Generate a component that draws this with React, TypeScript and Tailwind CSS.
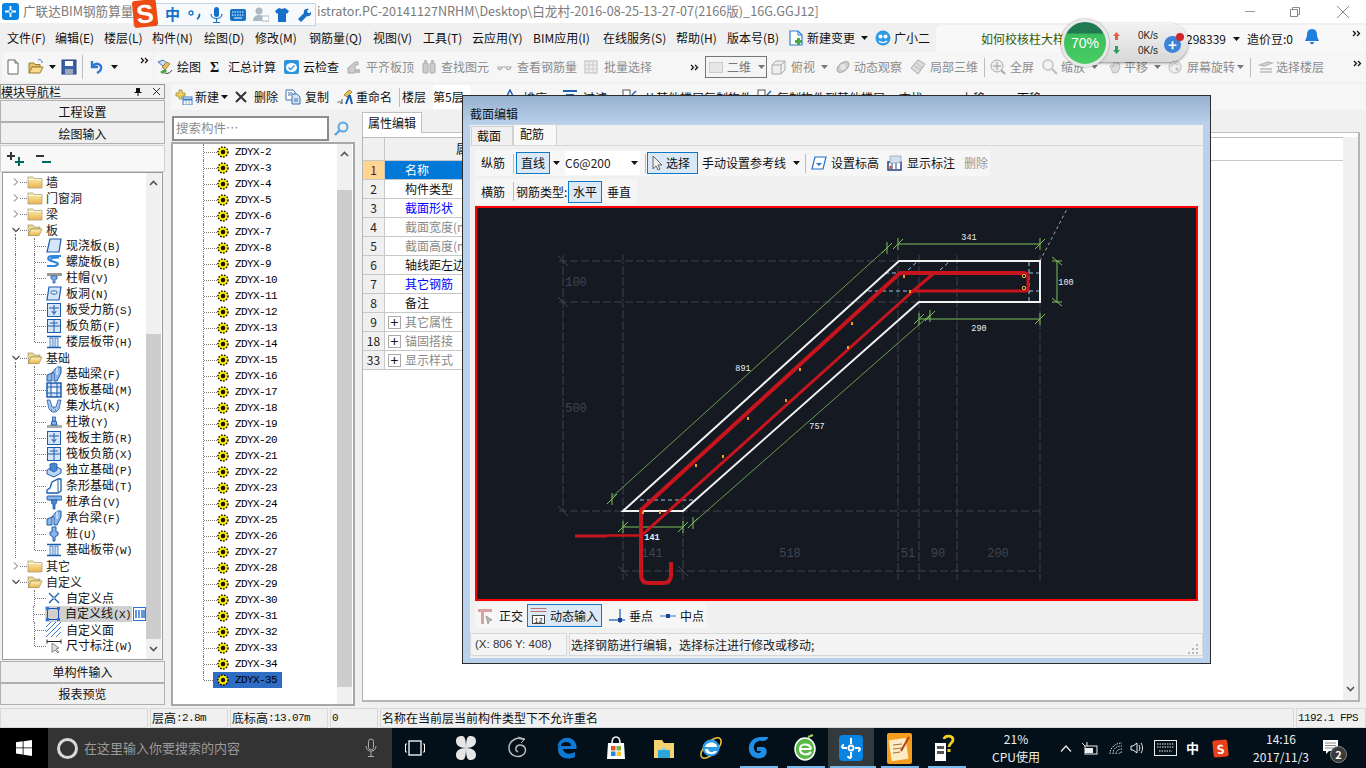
import React from "react";

const CJK = "font-['Noto_Sans_CJK_SC','Liberation_Sans',sans-serif]";

const Mx = ({ t }: { t: string }) => (
  <>
    {t.split(/([\x00-\x7f]+)/).map((p, i) =>
      /^[\x00-\x7f]/.test(p) ? (
        <span key={i} className="font-['Liberation_Mono',monospace] text-[11px] tracking-[-0.6px]">{p}</span>
      ) : (
        <span key={i}>{p}</span>
      )
    )}
  </>
);

const S = ({ children, w = 16, h = 16, cls = "" }: { children: React.ReactNode; w?: number; h?: number; cls?: string }) => (
  <svg width={w} height={h} viewBox={`0 0 ${w} ${h}`} className={"shrink-0 " + cls}>{children}</svg>
);

const Caret = ({ cls = "" }: { cls?: string }) => (
  <svg width="7" height="4" viewBox="0 0 7 4" className={"shrink-0 " + cls}><path d="M0 0h7L3.500 4z" fill="currentColor" /></svg>
);
const DblChevron = () => (
  <svg width="9" height="7" viewBox="0 0 9 7" className="shrink-0"><path d="M1 1l2.500 2.500L1 6M5 1l2.500 2.500L5 6" fill="none" stroke="#111" strokeWidth="1.300" /></svg>
);

/* ---------- tree icons ---------- */
const B = "#1d5cad";
const L = "#d5e6f8";
const Folder = ({ open }: { open?: boolean }) => (
  <S w={16} h={14}>
    <defs>
      <linearGradient id="fg" x1="0" y1="0" x2="0" y2="1"><stop offset="0" stopColor="#fff2b8" /><stop offset="1" stopColor="#e9b44a" /></linearGradient>
    </defs>
    {open ? (
      <>
        <path d="M1 2h5l1 2h6v2H4L1.500 12z" fill="#f3d98c" stroke="#9a8f6a" strokeWidth="0.700" />
        <path d="M4 6h11l-3 6.500H1z" fill="url(#fg)" stroke="#a08a4c" strokeWidth="0.700" />
      </>
    ) : (
      <>
        <path d="M1 2h5l1 1.500h8V13H1z" fill="url(#fg)" stroke="#a8a08a" strokeWidth="0.800" />
        <path d="M1.500 4.500h13" stroke="#fff8d8" />
      </>
    )}
  </S>
);

const TreeIcon = ({ k }: { k: string }) => {
  switch (k) {
    case "slab":
      return <S><path d="M4 1h11l-2 13H1z" fill={L} stroke={B} strokeWidth="1.200" /></S>;
    case "spiral":
      return <S><path d="M15 2H6C2 2 1 5 4 6.500l6 2c3 1 2 2.500-1 3.500H1M13 3.500L6 4c-1 0-1 1 0 1.500" fill="none" stroke="#2e86de" strokeWidth="2.200" /></S>;
    case "cap":
      return <S><rect x="1" y="3" width="15" height="3" fill="#999" /><path d="M5 6h6v3H9v4H7V9H5z" fill="#8ab4e8" stroke={B} strokeWidth="0.800" /></S>;
    case "hole":
      return <S><path d="M3 1h12l-2 13H1z" fill={L} stroke={B} strokeWidth="1.200" /><rect x="5" y="5" width="6" height="3" rx="1.500" fill="#fff" stroke={B} /></S>;
    case "grid":
      return <S><rect x="1.500" y="1.500" width="13" height="13" fill={L} stroke={B} /><path d="M3 6h10M8 3v10" stroke={B} fill="none" /><path d="M10 9a2 2 0 1 1-4 0" stroke={B} fill="none" /></S>;
    case "grid2":
      return <S><rect x="1.500" y="1.500" width="13" height="13" fill={L} stroke={B} /><path d="M2 8h12M8 2v12M4 5h8" stroke={B} fill="none" /></S>;
    case "band":
      return <S><path d="M1 2.500h14M1 13.500h14" stroke={B} strokeWidth="1.500" /><rect x="4" y="4" width="3" height="9" fill={L} stroke={B} strokeWidth="0.700" /><rect x="9" y="4" width="3" height="9" fill={L} stroke={B} strokeWidth="0.700" /></S>;
    case "beam":
      return <S><path d="M1 15V9l5-2V15zM6 7l5-6h4v6l-4 8H8V7z" fill="#8cb6e6" stroke={B} strokeWidth="1" /><path d="M11 1v8" stroke="#fff" /></S>;
    case "raft":
      return <S><rect x="1" y="1" width="14" height="14" fill={L} stroke={B} strokeWidth="1.500" /><path d="M5 1v14M11 1v14M1 5h14M1 11h14" stroke={B} /><rect x="6" y="6" width="4" height="4" fill="#fff" /></S>;
    case "pit":
      return <S><path d="M1 2h3l2 7h4l2-7h3l-2 9-3 3H6l-3-3z" fill="#a8c8ef" stroke={B} strokeWidth="0.800" /><path d="M5 12h1M9 12h1M7 10h1" stroke="#555" strokeDasharray="1 1" /></S>;
    case "pier":
      return <S><rect x="1" y="11" width="15" height="3" fill="#aaa" /><path d="M5 11l1-4h4l1 4z" fill="#8ab4e8" stroke={B} /><rect x="6.500" y="3" width="3" height="4" fill="#8ab4e8" stroke={B} strokeWidth="0.800" /></S>;
    case "iso":
      return <S><path d="M1 8l7-4 7 3v4l-7 4-7-3z" fill="#bcd5f2" stroke={B} /><path d="M4 2l4-1 3 1v6l-3 2-4-2z" fill="#4d86cc" stroke={B} strokeWidth="0.800" /></S>;
    case "strip":
      return <S><path d="M1 15v-3l3-2 2-6 6-3h3v12l-3 2H5z" fill="#fff" stroke={B} strokeWidth="1.300" /><path d="M12 1v13" stroke={B} /></S>;
    case "pilecap":
      return <S><rect x="1" y="2" width="15" height="4" rx="1" fill="#8ab4e8" stroke={B} /><path d="M5 6h6l-1 4H9v5H7v-5H6z" fill="#4d86cc" stroke={B} strokeWidth="0.800" /></S>;
    case "pile":
      return <S><path d="M6 1h4v5h2v3l-3 2v4H7v-4L4 9V6h2z" fill="#8ab4e8" stroke={B} /></S>;
    case "point":
      return <S><path d="M3 3l10 10M13 3L3 13" stroke={B} strokeWidth="1.300" /><rect x="7" y="7" width="2" height="2" fill="#fff" stroke={B} strokeWidth="0.600" /></S>;
    case "line":
      return <S><rect x="2.500" y="2.500" width="11" height="11" fill="none" stroke="#1e4fb0" /><rect x="1" y="1" width="3" height="3" fill="#2a74d8" /><rect x="12" y="1" width="3" height="3" fill="#2a74d8" /><rect x="1" y="12" width="3" height="3" fill="#2a74d8" /><rect x="12" y="12" width="3" height="3" fill="#2a74d8" /></S>;
    case "hatch":
      return <S><path d="M0 5l5-5M0 10L10 0M0 15L15 0M5 15L15 5M10 15l5-5" stroke="#3a7bd0" /></S>;
    case "dim":
      return <S><path d="M1 1.500v4M15 1.500v4M1 3.500h14" stroke="#222" /><path d="M6 5v9.500l3-2.500 3 3 1-1-3-3 3-1z" fill="#ddd" stroke="#888" /></S>;
    default:
      return <S><rect /></S>;
  }
};

const Chev = ({ open }: { open?: boolean }) => (
  <svg width="8" height="8" viewBox="0 0 8 8" className="shrink-0">
    {open ? <path d="M0.500 2l3.500 3.500L7.500 2" fill="none" stroke="#555" strokeWidth="1.300" /> : <path d="M2 0.500L5.500 4 2 7.500" fill="none" stroke="#aaa" strokeWidth="1.300" />}
  </svg>
);

const DotV = ({ half }: { half?: boolean }) => (
  <div className={"w-0 border-l border-dotted border-[#777] self-start " + (half ? "h-2" : "h-4")} />
);
const DotH = ({ w }: { w: string }) => <div className={"border-t border-dotted border-[#777] " + w} />;

const Group = ({ t, open, v }: { t: string; open?: boolean; v?: boolean }) => (
  <div className="h-4 flex items-center relative">
    <div className="w-[9px]" />
    <Chev open={open} />
    <DotH w="w-[7px]" />
    <Folder open={open} />
    <span className="ml-[3px] text-[12px] text-[#222]">{t}</span>
    {v && <div className="absolute left-[12px] top-[12px] h-[4px] border-l border-dotted border-[#777]" />}
  </div>
);

const Leaf = ({ t, k, v15, last, sel }: { t: string; k: string; v15?: boolean; last?: boolean; sel?: boolean }) => (
  <div className="h-4 flex items-center">
    <div className="w-[12px]" />
    {v15 ? <DotV /> : <div className="w-px" />}
    <div className="w-[18px]" />
    <DotV half={last} />
    <DotH w="w-[11px]" />
    <div className={"flex items-center h-4 " + (sel ? "bg-[#d0d0d0] pr-[1px]" : "")}>
      <TreeIcon k={k} />
      <span className="ml-[4px] text-[12px] whitespace-nowrap text-[#111] font-['Noto_Sans_CJK_SC',sans-serif]"><Mx t={t} /></span>
    </div>
    {sel && (
      <S w={13} h={14} cls="ml-[1px]"><rect x="0.500" y="0.500" width="12" height="13" fill="#fff" stroke="#2a74d8" /><path d="M3 3v8M6 3v8M9 3v8M11 3v8" stroke="#2a74d8" strokeWidth="1.500" /></S>
    )}
  </div>
);

/* ---------- toolbar icons ---------- */
const IFile = () => <S><path d="M3 1h7l3 3v11H3z" fill="#fff" stroke="#666" /><path d="M10 1v3h3" fill="#ddd" stroke="#666" /></S>;
const IOpen = () => <S><path d="M1 4h5l1 1.500h5v2.500H4L1 14z" fill="#e9c26a" stroke="#9b7f34" /><path d="M4 8h11l-3 6H1z" fill="#f5db8a" stroke="#9b7f34" /><path d="M10 1c2-1 4 0 4 3" fill="none" stroke="#3a7bd0" /></S>;
const ISave = () => <S><rect x="1" y="1" width="14" height="14" fill="#3b5fa8" stroke="#24427c" /><rect x="4" y="2" width="8" height="5" fill="#fff" /><rect x="4" y="10" width="8" height="5" fill="#9ab" /></S>;
const IUndo = () => <S><path d="M3 2v6h6M4 7c3-4 9-2 8 3-.500 2-2 3-4 4" fill="none" stroke="#2e78d0" strokeWidth="2.400" /></S>;
const IDraw = () => <S><path d="M1 3l5-2 4 3-4 3z" fill="#cfe0f4" stroke="#4a78b0" /><path d="M5 8l5-5 3 2-5 6z" fill="#e9bd55" stroke="#8a6a20" strokeWidth="0.700" /><path d="M3 13l5-3 2 2-4 3z" fill="#49a049" /><path d="M8 14c3 1 5 0 7-3" fill="none" stroke="#333" /></S>;
const ICloud = () => <S><rect x="1" y="1" width="15" height="14" rx="2" fill="#2f94dc" /><ellipse cx="8.500" cy="8.500" rx="5.500" ry="4.500" fill="#fff" /><path d="M5.500 8.500l2 2 4-4" fill="none" stroke="#2f94dc" strokeWidth="1.300" /></S>;
const IGrayA = () => <S><path d="M2 14V9l7-6h3v3H9v8z" fill="#ccc" stroke="#aaa" /><path d="M8 14V10h6v4z" fill="#bbb" /></S>;
const IBino = () => <S><rect x="2" y="4" width="5" height="10" rx="1" fill="#ccc" stroke="#aaa" /><rect x="9" y="4" width="5" height="10" rx="1" fill="#ccc" stroke="#aaa" /><rect x="3" y="1" width="3" height="3" fill="#bbb" /><rect x="10" y="1" width="3" height="3" fill="#bbb" /></S>;
const IGlass = () => <S><path d="M1 8c0 3 2 3 3 2l1-2H1zM9 8c0 3 3 3 4 2l1-2zM5 8h4" fill="none" stroke="#aaa" strokeWidth="1.200" /></S>;
const IBatch = () => <S><rect x="1" y="2" width="12" height="12" fill="#eee" stroke="#bbb" /><path d="M1 6h12M1 10h12M5 2v12M9 2v12" stroke="#ccc" /></S>;
const ICube = () => <S><path d="M1 6l4-4h9v9l-4 4H1z" fill="#eee" stroke="#aaa" /><path d="M1 6h9v9M10 6l4-4" fill="none" stroke="#aaa" /></S>;
const IOrbit = () => <S><ellipse cx="8" cy="8" rx="7" ry="4" transform="rotate(-40 8 8)" fill="#ccc" stroke="#aaa" /><circle cx="8" cy="8" r="3" fill="#e4e4e4" /></S>;
const IBox3 = () => <S><path d="M8 1l7 4-7 10-7-6z" fill="#ddd" stroke="#aaa" /><path d="M3 6l8 5M6 3l6 6" stroke="#bbb" /></S>;
const IMag = () => <S><circle cx="7" cy="7" r="6" fill="#eee" stroke="#aaa" /><path d="M7 3v8M3 7h8" stroke="#999" /><path d="M11 11l4 4" stroke="#aaa" strokeWidth="2" /></S>;
const IZoom = () => <S><circle cx="6" cy="6" r="5" fill="#f4f4f4" stroke="#ccc" strokeWidth="2" /><path d="M10 10l5 5" stroke="#bbb" strokeWidth="2" /></S>;
const IHand = () => <S><path d="M3 7l2-1 1 2 1-6 2 0 1 2 2 0 1 4-2 5-5 1z" fill="#ddd" stroke="#bbb" /></S>;
const IRot = () => <S><circle cx="8" cy="8" r="6" fill="#eee" stroke="#ccc" strokeWidth="1.500" /><path d="M4 8a4 4 0 0 1 7-2" fill="none" stroke="#bbb" /><circle cx="10" cy="10" r="1.500" fill="#bbb" /></S>;
const IFloors = () => <S><path d="M2 6l8-3 4 1-8 3zM2 10h12M2 13h12" stroke="#bbb" fill="#e4e4e4" strokeWidth="1.400" /></S>;
const INew = () => <S w={18} h={16}><path d="M4 1h3v3h3v3H7v3H4V7H1V4h3z" fill="#f2d25e" stroke="#a08a30" strokeWidth="0.800" /><rect x="8" y="8" width="9" height="8" fill="#fff" stroke="#3a7bc8" /><path d="M8 10.500h9" stroke="#3a7bc8" strokeWidth="2" /><path d="M11 11v5M14 11v5" stroke="#8ab" /></S>;
const ICopy = () => <S><path d="M1 1h7l2 2v8H1z" fill="#fff" stroke="#4070a8" /><path d="M7 5h5l3 3v7H7z" fill="#d6e6f8" stroke="#4070a8" /><path d="M3 4h4M3 6h3M9 10h4M9 12h4" stroke="#4070a8" /></S>;
const IRename = () => <S><path d="M7 6l5-5 3 2-5 5z" fill="#e5c050" stroke="#8a6a20" strokeWidth="0.700" /><path d="M9 15l3-8h1l2 8" fill="none" stroke="#1d5cad" strokeWidth="2" /><path d="M1 14c0-2 3-2 3 0v1M5 10v5" stroke="#555" fill="none" /></S>;
const IBlueA = () => <S w={10} h={9}><path d="M1 9l4-8 4 8" fill="none" stroke="#2060b0" strokeWidth="1.500" /></S>;
const IFilter = () => <S w={14} h={9}><path d="M0 2h14M3 6h8" stroke="#2060b0" strokeWidth="2" /></S>;
const ICopyTop = () => <S w={16} h={9}><rect x="1" y="1" width="7" height="8" fill="#fff" stroke="#555" /><path d="M10 6l4-4" stroke="#2060b0" strokeWidth="1.500" /></S>;

const Tool = ({ w, icon, text, gray, gap, caret }: { w: string; icon?: React.ReactNode; text?: string; gray?: boolean; gap?: string; caret?: string }) => (
  <div className={"shrink-0 flex items-center h-full " + w}>
    {icon}
    {text && <span className={"text-[12px] whitespace-nowrap " + (gap || "ml-[4px]") + " " + (gray ? "text-[#8c8c8c]" : "text-[#111]")}>{text}</span>}
    {caret && <Caret cls={caret + " " + (gray ? "text-[#777]" : "text-[#111]")} />}
  </div>
);
const Sep = ({ cls = "" }: { cls?: string }) => <div className={"w-px h-[19px] bg-[#bcbcbc] shrink-0 " + cls} />;

/* ---------- drawing ---------- */
const Dim = ({ x, y, v }: { x: number; y: number; v?: boolean }) => (
  <g stroke="#7cc05a" strokeWidth="1" fill="none">
    {v ? <path d={`M${x - 5} ${y}H${x + 5}M${x - 5} ${y - 4}L${x + 5} ${y + 4}`} /> : <path d={`M${x} ${y - 6}V${y + 6}M${x - 5} ${y + 5}L${x + 5} ${y - 5}`} />}
  </g>
);

const Drawing = () => (
  <svg width="719" height="391" viewBox="477 208 719 391" className="block">
    <rect x="477" y="208" width="719" height="391" fill="#151922" />
    <g stroke="#3d434f" strokeWidth="1" fill="none">
      <path d="M563 255V511M623 255V580M683 505V580M898 255V580M919 255V580M957 255V580M1040 255V580" strokeDasharray="9 2" />
      <path d="M556 261H1040M556 302H1040M556 511H1040M618 571H1040" />
    </g>
    <g stroke="#000" strokeWidth="1" fill="none" strokeDasharray="3 8">
      <path d="M556 261H1040M556 302H1040M556 511H1040M618 571H1040" />
    </g>
    <g stroke="#3d434f" fill="none">
      <path d="M558 256l10 10M558 297l10 10M558 506l10 10M618 566l10 10M678 566l10 10" />
    </g>
    <g fontFamily="'Liberation Mono',monospace" fontSize="12" fill="#3f4651" textAnchor="middle">
      <text x="576" y="286">100</text>
      <text x="576" y="412">500</text>
      <text x="652" y="557">141</text>
      <text x="790" y="557">518</text>
      <text x="908" y="557">51</text>
      <text x="938" y="557">90</text>
      <text x="998" y="557">200</text>
    </g>
    <path d="M1040 261L1067 209" stroke="#a8a8a8" fill="none" strokeDasharray="3 3" />
    <g stroke="#9cc4e8" fill="none" strokeDasharray="4 3">
      <path d="M908 270l9-8M940 270l9-8M885 273H900M868 291H913M1029 273H1040M1029 291H1040M1029 262V302M640 500H694" />
    </g>
    <g stroke="#f2f2f2" strokeWidth="2" fill="none" strokeLinejoin="miter">
      <path d="M1040 261H899L623 511H683L919 302H1040Z" />
    </g>
    <g stroke="#7cc05a" fill="none">
      <path d="M898 244H1040M1057 261V302M919 319H1040M623 527H683" />
      <path d="M887 248L612 497M930 315L693 523" strokeWidth="0.800" />
    </g>
    <Dim x={898} y={244} /><Dim x={1040} y={244} /><Dim x={1057} y={261} v /><Dim x={1057} y={302} v />
    <Dim x={919} y={319} /><Dim x={1040} y={319} /><Dim x={623} y={527} /><Dim x={683} y={527} />
    <Dim x={887} y={248} /><Dim x={612} y={499} /><Dim x={930} y={316} /><Dim x={693} y={523} />
    <g fontFamily="'Liberation Mono',monospace" fontSize="8.500" fill="#e6eef6" textAnchor="middle">
      <text x="969" y="240">341</text>
      <text x="979" y="331">290</text>
      <text x="1066" y="285">100</text>
      <text x="743" y="371">891</text>
      <text x="817" y="429">757</text>
      <text x="652" y="540" fontWeight="700">141</text>
    </g>
    <g stroke="#c8141c" fill="none" strokeLinejoin="round">
      <path d="M1025 273H900L641 510V575Q641 583 649 583H663Q671 583 671 575V562" strokeWidth="4" />
      <path d="M1025 273Q1028 273 1028 276V288Q1028 291 1025 291H913L642 535" strokeWidth="3" />
      <path d="M933 274L913 291" strokeWidth="3" />
      <path d="M575 536H607" strokeWidth="3" />
      <path d="M607 535.500H642" strokeWidth="2.500" />
    </g>
    <g fill="#151922" stroke="#f0c040">
      <circle cx="1024" cy="276" r="1.700" />
      <circle cx="1024" cy="288" r="1.700" />
    </g>
    <g fill="#f0a020">
      <rect x="903" y="275" width="2" height="3" /><rect x="909" y="290" width="2" height="3" /><rect x="851" y="322" width="2" height="3" />
      <rect x="847" y="346" width="2" height="3" /><rect x="799" y="368" width="2" height="3" /><rect x="785" y="399" width="2" height="3" />
      <rect x="747" y="417" width="2" height="3" /><rect x="722" y="455" width="2" height="3" /><rect x="695" y="464" width="2" height="3" />
      <rect x="642" y="511" width="2" height="3" /><rect x="659" y="511" width="2" height="3" />
    </g>
  </svg>
);

/* ---------- taskbar icons ---------- */
const WinLogo = () => <svg width="16" height="16" viewBox="0 0 16 16"><path d="M0 2.300L6.700 1.300V7.500H0zM7.500 1.200L16 0V7.500H7.500zM0 8.300H6.700V14.600L0 13.600zM7.500 8.300H16V16L7.500 14.800z" fill="#fff" /></svg>;
const Edge = () => <svg width="22" height="24" viewBox="0 0 22 24"><path d="M1 11C3 2 11 0 16 3c4 2.500 5 7 4.500 10H7c.500 5 7 6 12 3v5c-6 3-17 2-17-8 0-3 2-6 5-7-1 1-2 2-2 4h10c0-5-8-6-14 1z" fill="#0f78d4" /></svg>;
const Store = () => <svg width="22" height="24" viewBox="0 0 22 24"><path d="M3 7h16l1 16H2z" fill="#fff" /><path d="M7 7c0-8 8-8 8 0" fill="none" stroke="#fff" strokeWidth="1.500" /><rect x="6" y="10" width="4.500" height="4.500" fill="#e95420" /><rect x="11.500" y="10" width="4.500" height="4.500" fill="#7cb342" /><rect x="6" y="15.500" width="4.500" height="4.500" fill="#1e88e5" /><rect x="11.500" y="15.500" width="4.500" height="4.500" fill="#fbc02d" /></svg>;
const Explorer = () => <svg width="22" height="22" viewBox="0 0 22 22"><path d="M1 3h8l2 3h10v15H1z" fill="#f6d36e" /><path d="M5 13h12v8H5z" fill="#2ca5dd" /><path d="M8 13l3-3 3 3" fill="#7fd3f4" /></svg>;
const IE = () => <svg width="26" height="30" viewBox="0 0 26 30"><ellipse cx="13" cy="15" rx="13" ry="6" transform="rotate(-45 13 15)" fill="none" stroke="#f2c230" strokeWidth="1.500" /><circle cx="13" cy="15" r="8.500" fill="#2e9be6" /><path d="M7 14h12c0-6-11-6-12 0zM7 16c0 6 10 7 12 2h-3c-1 2-5 2-6-2z" fill="#fff" /></svg>;
const GBlue = () => <svg width="24" height="28" viewBox="0 0 24 28"><path d="M17 3C7 2 2 9 3 16c1 8 11 11 16 6 3-4 2-9-3-9h-5v4h4c0 3-6 3-7-2-1-6 4-9 8-8 4 0 6-2 6-4z" fill="#1d8fe6" /></svg>;
const GreenE = () => <svg width="22" height="28" viewBox="0 0 22 28"><ellipse cx="11" cy="15" rx="10" ry="11" fill="#57b946" stroke="#fff" strokeWidth="1.500" /><path d="M5 15h12M6 15c0-6 10-6 11 0M6 15c0 6 8 7 11 3" fill="none" stroke="#fff" strokeWidth="2.200" /><path d="M14 3l5-2" stroke="#9ad34e" strokeWidth="2" /></svg>;
const GlodonApp = () => (
  <svg width="24" height="26" viewBox="0 0 24 26"><rect width="24" height="26" rx="4" fill="#0a84e0" /><circle cx="12" cy="13" r="2.500" fill="none" stroke="#fff" strokeWidth="1.800" /><path d="M12 3v6M12 17v6M3 13h5M16 13h5M12 23c-2 0-3-1-3-2M3 13c0-2 1-3 2-3M21 13c0 2-1 3-2 3" fill="none" stroke="#fff" strokeWidth="2" /></svg>
);
const Notes = () => <svg width="25" height="31" viewBox="0 0 25 31"><rect width="25" height="31" rx="2" fill="#f59e1e" /><rect x="3" y="6" width="17" height="21" fill="#fdebc5" transform="rotate(-8 12 16)" /><path d="M6 12l9-1M6 16l9-1M6 20l7-1" stroke="#a87530" /><path d="M14 18l8-14" stroke="#b8401a" strokeWidth="2" /></svg>;
const Help = () => <svg width="20" height="28" viewBox="0 0 20 28"><rect x="0" y="9" width="11" height="18" fill="#fff" /><rect x="2" y="12" width="7" height="3" fill="#555" /><rect x="2" y="17" width="7" height="3" fill="#555" /><path d="M9 5c1-4 9-4 9 1 0 3-4 3-4 7" fill="none" stroke="#f0d020" strokeWidth="2.800" /><rect x="12.500" y="15" width="3" height="3" fill="#f0d020" /></svg>;

const Cell = ({ w, children, grow }: { w?: string; children?: React.ReactNode; grow?: boolean }) => (
  <div className={"h-[20px] bg-[#f0f0f0] border border-[#d8d8d8] flex items-center pl-[1px] text-[12px] text-[#111] whitespace-nowrap overflow-hidden " + (grow ? "flex-1" : "shrink-0 " + (w || ""))}>{children}</div>
);

const menus: [string, string][] = [
  ["文件(F)", "w-[48px]"], ["编辑(E)", "w-[49px]"], ["楼层(L)", "w-[48px]"], ["构件(N)", "w-[52px]"],
  ["绘图(D)", "w-[51px]"], ["修改(M)", "w-[54px]"], ["钢筋量(Q)", "w-[64px]"], ["视图(V)", "w-[50px]"],
  ["工具(T)", "w-[49px]"], ["云应用(Y)", "w-[61px]"], ["BIM应用(I)", "w-[70px]"], ["在线服务(S)", "w-[73px]"],
  ["帮助(H)", "w-[51px]"], ["版本号(B)", "w-[61px]"],
];

const ids = Array.from({ length: 34 }, (_, i) => i + 2);

const props: [string, string, string][] = [
  ["1", "名称", "sel"], ["2", "构件类型", ""], ["3", "截面形状", "b"], ["4", "截面宽度(mm)", "g"], ["5", "截面高度(mm)", "g"],
  ["6", "轴线距左边线距离", ""], ["7", "其它钢筋", "b"], ["8", "备注", ""], ["9", "其它属性", "p"], ["18", "锚固搭接", "p"], ["33", "显示样式", "p"],
];

function App() {
  return (
    <div className={"relative w-[1366px] h-[768px] overflow-hidden bg-[#f0f0f0] flex flex-col text-[12px] " + CJK}>
      {/* title bar */}
      <div className="h-[23px] shrink-0 bg-white flex items-center text-[12.600px] text-[#7a7a7a] whitespace-nowrap relative">
        <div className="ml-[2px] w-[17px] h-[17px] rounded-[3px] bg-[#0a84e0] flex items-center justify-center">
          <svg width="13" height="13" viewBox="0 0 13 13"><path d="M6.500 1v3.500M6.500 8.500V12M1 6.500h3.500M8.500 6.500H12" stroke="#fff" strokeWidth="1.800" /><circle cx="6.500" cy="6.500" r="1.800" fill="none" stroke="#fff" /></svg>
        </div>
        <span className="ml-[4px] w-[294px] shrink-0">广联达BIM钢筋算量</span>
        <span>istrator.PC-20141127NRHM\Desktop\白龙村-2016-08-25-13-27-07(2166版)_16G.GGJ12]</span>
        <div className="ml-auto flex items-center">
          <div className="w-[10px] h-px bg-[#999] mr-[35px]" />
          <svg width="10" height="10" viewBox="0 0 10 10" className="mr-[36px]"><path d="M0.500 2.500h7v7h-7zM2.500 2.500v-2h7v7h-2" fill="none" stroke="#888" /></svg>
          <svg width="14" height="14" viewBox="0 0 14 14" className="mr-[16px]"><path d="M1 1l12 12M13 1L1 13" stroke="#888" /></svg>
        </div>
      </div>

      {/* menu bar */}
      <div className="h-[29px] shrink-0 bg-[#f0f0f0] flex items-center pl-[7px] text-[12px] text-[#111] whitespace-nowrap">
        {menus.map(([t, w]) => <span key={t} className={"shrink-0 " + w}>{t}</span>)}
        <S><path d="M2 1h8l4 4v10H2z" fill="#fff" stroke="#2d7fd0" strokeWidth="1.200" /><path d="M10 1v4h4" fill="none" stroke="#2d7fd0" /><path d="M9 8h3v2h2v3h-2v2H9v-2H7v-3h2z" fill="#4aa64a" /></S>
        <span className="ml-[3px]">新建变更</span>
        <Caret cls="ml-[6px] text-[#111]" />
        <S cls="ml-[7px]"><circle cx="8" cy="8" r="7.500" fill="#2e9be6" /><circle cx="5.500" cy="6.500" r="2" fill="#fff" /><circle cx="10.500" cy="6.500" r="2" fill="#fff" /><path d="M4 11c2 2 6 2 8 0" stroke="#fff" fill="none" strokeWidth="1.200" /></S>
        <span className="ml-[3px] w-[42px]">广小二</span>
        <div className="flex-1 h-[27px] self-end bg-[#f8f8f8] rounded-tl-[6px] flex items-center relative">
          <span className="ml-[45px] text-[#345a00]">如何校核柱大样</span>
          <span className="absolute left-[250px]">298339</span>
          <Caret cls="absolute left-[297px] top-[12px] text-[#111]" />
          <span className="absolute left-[311px]">造价豆:0</span>
          <svg width="16" height="18" viewBox="0 0 16 18" className="absolute left-[368px] top-[3px]"><path d="M8 1c4 0 5 3 5 6 0 3 2 5 2 6H1c0-1 2-3 2-6 0-3 1-6 5-6zM6 14h4c0 3-4 3-4 0z" fill="#1f7fe0" /></svg>
          <div className="absolute left-[416px] top-[5px]"><DblChevron /></div>
        </div>
      </div>

      {/* main toolbar */}
      <div className="h-[30px] shrink-0 bg-[#f0f0f0] flex items-center text-[12px]">
        <div className="w-[151px] ml-[2px] h-[30px] bg-[#f6f6f6] rounded-l-[4px] flex items-center pl-[3px] relative">
          <IFile /><div className="w-[7px]" /><IOpen /><Caret cls="ml-[5px] text-[#111]" /><div className="w-[5px]" /><ISave />
          <div className="w-[5px]" /><Sep cls="!h-[24px]" /><div className="w-[6px]" /><IUndo /><Caret cls="ml-[6px] text-[#111]" />
          <div className="absolute left-[138px] top-[5px]"><DblChevron /></div>
        </div>
        <div className="h-[30px] ml-[1px] w-[549px] bg-[#f6f6f6] rounded-l-[4px] flex items-center pl-[3px] relative">
          <Tool w="w-[53px]" icon={<IDraw />} text="绘图" />
          <Tool w="w-[73px]" icon={<span className="w-[12px] text-[14px] font-bold text-[#111] font-['Liberation_Serif',serif]">Σ</span>} text="汇总计算" gap="ml-[6px]" />
          <Tool w="w-[63px]" icon={<ICloud />} text="云检查" />
          <Tool w="w-[75px]" icon={<IGrayA />} text="平齐板顶" gray />
          <Tool w="w-[76px]" icon={<IBino />} text="查找图元" gray />
          <Tool w="w-[87px]" icon={<IGlass />} text="查看钢筋量" gray />
          <Tool w="w-[106px]" icon={<IBatch />} text="批量选择" gray />
          <DblChevron />
        </div>
        <div className="h-[30px] flex-1 bg-[#f6f6f6] rounded-l-[4px] flex items-center relative">
          <div className="ml-[2px] mr-[4px] w-[62px] h-[22px] bg-[#f4f4f4] border border-[#777] flex items-center pl-[3px] shrink-0">
            <div className="w-[14px] h-[11px] bg-[#e6e6e6] border border-[#ccc]" />
            <span className="ml-[4px] text-[#777]">二维</span>
            <Caret cls="ml-[7px] text-[#777]" />
          </div>
          <Tool w="w-[64px]" icon={<ICube />} text="俯视" gray caret="ml-[6px]" />
          <Tool w="w-[75px]" icon={<IOrbit />} text="动态观察" gray gap="ml-[3px]" />
          <Tool w="w-[74px]" icon={<IBox3 />} text="局部三维" gray />
          <Sep cls="mr-[5px]" />
          <Tool w="w-[52px]" icon={<IMag />} text="全屏" gray />
          <Tool w="w-[65px]" icon={<IZoom />} text="缩放" gray gap="ml-[3px]" caret="ml-[6px]" />
          <Tool w="w-[60px]" icon={<IHand />} text="平移" gray gap="ml-[1px]" caret="ml-[6px]" />
          <Tool w="w-[83px]" icon={<IRot />} text="屏幕旋转" gray caret="ml-[2px]" />
          <Sep cls="mr-[7px]" />
          <Tool w="w-[70px]" icon={<IFloors />} text="选择楼层" gray gap="ml-[2px]" />
          <div className="absolute left-[650px] top-[8px]"><DblChevron /></div>
        </div>
      </div>

      {/* main region */}
      <div className="flex-1 min-h-0 flex">
        {/* left navigator */}
        <div className="w-[165px] shrink-0 flex flex-col pt-[2px] pb-[3px]">
          <div className="h-[15px] border border-[#999] bg-[#f0f0f0] flex items-center text-[12px] leading-none text-[#111]">
            模块导航栏
            <svg width="8" height="10" viewBox="0 0 8 10" className="ml-auto"><path d="M2 1h4v4h1.500v1h-3v3h-1V6h-3V5H2z" fill="#111" /></svg>
            <svg width="7" height="7" viewBox="0 0 7 7" className="ml-[11px] mr-[4px]"><path d="M0 0l7 7M7 0L0 7" stroke="#333" /></svg>
          </div>
          <div className="h-[22px] mt-[1px] pt-[2px] border border-[#b0b0b0] bg-[#f0f0f0] flex items-center justify-center text-[12px] text-[#111]">工程设置</div>
          <div className="h-[22px] pt-[2px] border border-[#b0b0b0] bg-[#f0f0f0] flex items-center justify-center text-[12px] text-[#111]">绘图输入</div>
          <div className="h-[27px] mt-[1px] bg-[#f8f8f8] border border-[#d0d0d0] flex items-center pl-[6px]">
            <S w={20} h={16}><path d="M4 1v8M0 5h8" stroke="#333" strokeWidth="2" /><path d="M12 6v9M8 11h9" stroke="#006a60" strokeWidth="2" /></S>
            <S w={18} h={16} cls="ml-[9px]"><path d="M0 5h8" stroke="#333" strokeWidth="2" /><path d="M6 11h9" stroke="#006a60" strokeWidth="2" /></S>
          </div>
          <div className="flex-1 min-h-0 mx-[2px] border border-[#9a9a9a] bg-white flex">
            <div className="flex-1 pt-[1px] overflow-hidden">
              <Group t="墙" />
              <Group t="门窗洞" />
              <Group t="梁" />
              <Group t="板" open v />
              <Leaf t="现浇板(B)" k="slab" v15 />
              <Leaf t="螺旋板(B)" k="spiral" v15 />
              <Leaf t="柱帽(V)" k="cap" v15 />
              <Leaf t="板洞(N)" k="hole" v15 />
              <Leaf t="板受力筋(S)" k="grid" v15 />
              <Leaf t="板负筋(F)" k="grid2" v15 />
              <Leaf t="楼层板带(H)" k="band" last v15 />
              <Group t="基础" open v />
              <Leaf t="基础梁(F)" k="beam" v15 />
              <Leaf t="筏板基础(M)" k="raft" v15 />
              <Leaf t="集水坑(K)" k="pit" v15 />
              <Leaf t="柱墩(Y)" k="pier" v15 />
              <Leaf t="筏板主筋(R)" k="grid" v15 />
              <Leaf t="筏板负筋(X)" k="grid2" v15 />
              <Leaf t="独立基础(P)" k="iso" v15 />
              <Leaf t="条形基础(T)" k="strip" v15 />
              <Leaf t="桩承台(V)" k="pilecap" v15 />
              <Leaf t="承台梁(F)" k="beam" v15 />
              <Leaf t="桩(U)" k="pile" v15 />
              <Leaf t="基础板带(W)" k="band" last v15 />
              <Group t="其它" />
              <Group t="自定义" open />
              <Leaf t="自定义点" k="point" />
              <Leaf t="自定义线(X)" k="line" sel />
              <Leaf t="自定义面" k="hatch" />
              <Leaf t="尺寸标注(W)" k="dim" last />
            </div>
            <div className="w-[15px] shrink-0 mr-[1px] bg-[#f0f0f0] flex flex-col">
              <div className="h-[161px] pt-[7px] flex justify-center items-start shrink-0"><svg width="9" height="6" viewBox="0 0 9 6"><path d="M1 5l3.500-3.500L8 5" fill="none" stroke="#555" strokeWidth="1.600" /></svg></div>
              <div className="h-[305px] bg-[#cdcdcd] shrink-0" />
              <div className="flex-1 flex justify-center items-center"><svg width="9" height="6" viewBox="0 0 9 6"><path d="M1 1l3.500 3.500L8 1" fill="none" stroke="#555" strokeWidth="1.600" /></svg></div>
            </div>
          </div>
          <div className="h-[22px] mt-[1px] border border-[#b0b0b0] bg-[#f0f0f0] flex items-center justify-center text-[12px] text-[#111]">单构件输入</div>
          <div className="h-[22px] border border-[#b0b0b0] bg-[#f0f0f0] flex items-center justify-center text-[12px] text-[#111]">报表预览</div>
        </div>

        {/* centre & right */}
        <div className="flex-1 min-w-0 flex flex-col pl-[6px]">
          <div className="h-[26px] mt-[2px] shrink-0 bg-[#f6f6f6] rounded-tl-[4px] flex items-center text-[12px] text-[#111] whitespace-nowrap pl-[4px]">
            <Tool w="w-[60px]" icon={<INew />} text="新建" gap="ml-[2px]" caret="ml-[2px]" />
            <svg width="12" height="12" viewBox="0 0 12 12" className="shrink-0"><path d="M1 1l10 10M11 1L1 11" stroke="#333" strokeWidth="2" /></svg>
            <span className="ml-[7px] w-[31px] shrink-0">删除</span>
            <Tool w="w-[52px]" icon={<ICopy />} text="复制" />
            <Tool w="w-[62px]" icon={<IRename />} text="重命名" gap="ml-[3px]" />
            <Sep cls="mr-[2px]" />
            <span className="w-[31px] shrink-0">楼层</span>
            <span className="w-[37px] h-[24px] bg-white flex items-center shrink-0">第5层</span>
            {/* tops of the items that the dialog covers */}
            <div className="flex items-start h-[26px] pt-[5px]">
              <div className="w-[35px] shrink-0" />
              <IBlueA /><span className="ml-[8px] w-[40px]">排序</span>
              <IFilter /><span className="ml-[6px] w-[39px]">过滤</span>
              <ICopyTop /><span className="ml-[6px] w-[113px]">从其他楼层复制构件</span>
              <ICopyTop /><span className="ml-[4px] w-[115px]">复制构件到其他楼层</span>
              <span className="ml-[7px] w-[60px]">查找</span>
              <span className="ml-[2px] w-[56px]">上移</span>
              <span>下移</span>
            </div>
          </div>
          <div className="flex-1 min-h-0 flex mt-[1px]">
            {/* component list */}
            <div className="w-[184px] shrink-0 flex flex-col pb-[2px]">
              <div className="h-[31px] flex items-start pt-[5px] pl-[1px]">
                <div className="w-[157px] h-[25px] border-2 border-[#8c8c8c] bg-white flex items-center pl-[2px] text-[12.500px] text-[#8c8c8c]">搜索构件…</div>
                <svg width="15" height="15" viewBox="0 0 15 15" className="ml-[5px] mt-[5px]"><circle cx="9" cy="6" r="4.500" fill="none" stroke="#59a6e0" strokeWidth="2" /><path d="M6 9l-5 5" stroke="#59a6e0" strokeWidth="2.400" /></svg>
              </div>
              <div className="flex-1 min-h-0 border-2 border-[#a8a8a8] bg-white flex">
                <div className="flex-1 overflow-hidden">
                  {ids.map((n, i) => (
                    <div key={n} className="h-4 flex items-center">
                      <div className="w-[30px]" />
                      <DotV half={i === ids.length - 1} />
                      <DotH w="w-[13px]" />
                      <div className={"flex items-center h-4 pl-[4px] w-[69px] -ml-[4px] " + (n === 35 ? "bg-[#2f6cc4]" : "")}>
                        <svg width="12" height="12" viewBox="0 0 12 12" className="shrink-0"><circle cx="6" cy="6" r="5" fill="#ffe600" /><circle cx="6" cy="6" r="5" fill="none" stroke="#000" strokeDasharray="1.500 1.500" strokeWidth="1.400" /><circle cx="6" cy="6" r="2.200" fill="#111" /></svg>
                        <span className="ml-[6px] text-[#000] font-['Liberation_Mono',monospace] text-[11px] tracking-[-0.6px] whitespace-nowrap">ZDYX-{n}</span>
                      </div>
                    </div>
                  ))}
                </div>
                <div className="w-[15px] mr-[1px] shrink-0 bg-[#f0f0f0] flex flex-col">
                  <div className="h-[46px] shrink-0 flex justify-center pt-[7px]"><svg width="9" height="6" viewBox="0 0 9 6"><path d="M1 5l3.500-3.500L8 5" fill="none" stroke="#555" strokeWidth="1.600" /></svg></div>
                  <div className="h-[497px] shrink-0 bg-[#cdcdcd]" />
                </div>
              </div>
            </div>

            {/* properties */}
            <div className="flex-1 min-w-0 flex flex-col pl-[7px] pb-[6px] pr-[6px]">
              <div className="h-[22px] flex items-end shrink-0">
                <div className="h-[21px] w-[60px] bg-white border border-b-0 border-[#c0c0c0] flex items-center justify-center text-[12px] text-[#111]">属性编辑</div>
                <div className="flex-1 border-b border-[#c0c0c0]" />
              </div>
              <div className="flex-1 min-h-0 bg-white border border-t-0 border-r-2 border-b-2 border-[#b4b4b4] flex pt-[4px]">
                <div className="flex-1 border-t border-[#bcbcbc]">
                  <div className="h-[23px] flex border-b border-[#c8c8c8]">
                    <div className="w-[22px] bg-[#f0f0f0] border-r border-[#c8c8c8]" />
                    <div className="w-[320px] bg-[#f0f0f0] flex items-center pl-[71px] text-[#111] text-[12px]">属性名称</div>
                  </div>
                  {props.map(([n, t, s]) => (
                    <div key={n} className="h-[19px] flex">
                      <div className={"w-[22px] shrink-0 border-r border-b border-[#c8c8c8] flex items-center justify-center text-[12px] " + (s === "sel" ? "bg-[#ffd58f] text-[#601030]" : "bg-[#f0f0f0] text-[#222]")}>{n}</div>
                      <div className={"w-[320px] border-b border-[#c8c8c8] flex items-center text-[12px] whitespace-nowrap " + (s === "sel" ? "bg-[#0078d7] text-white" : s === "b" ? "text-[#0000ff]" : s === "g" || s === "p" ? "text-[#8a8a8a]" : "text-[#111]")}>
                        {s === "p" ? (
                          <span className="ml-[3px] w-[13px] h-[13px] border border-[#aaa] flex items-center justify-center text-[#111] text-[14px] leading-none mr-[4px]">+</span>
                        ) : (
                          <span className="w-[20px]" />
                        )}
                        {t}
                      </div>
                    </div>
                  ))}
                </div>
                <div className="w-[15px] shrink-0 bg-[#f0f0f0] flex flex-col justify-end items-center pb-[8px]"><svg width="9" height="6" viewBox="0 0 9 6"><path d="M1 1l3.500 3.500L8 1" fill="none" stroke="#555" strokeWidth="1.600" /></svg></div>
              </div>
            </div>
          </div>
        </div>
      </div>

      {/* status bar */}
      <div className="h-[20px] shrink-0 flex gap-[2px] font-['Noto_Sans_CJK_SC',sans-serif]">
        <Cell w="w-[148px]" />
        <Cell w="w-[78px]"><Mx t="层高:2.8m" /></Cell>
        <Cell w="w-[98px]"><Mx t="底标高:13.07m" /></Cell>
        <Cell w="w-[48px]"><Mx t="0" /></Cell>
        <Cell grow>名称在当前层当前构件类型下不允许重名</Cell>
        <Cell w="w-[70px]"><Mx t="1192.1 FPS" /></Cell>
      </div>

      {/* taskbar */}
      <div className="h-[40px] shrink-0 bg-[#03101a] flex items-center text-white whitespace-nowrap relative">
        <div className="w-[48px] h-full bg-black flex items-center justify-center"><WinLogo /></div>
        <div className="w-[344px] h-full bg-[#333333] flex items-center">
          <div className="ml-[9px] w-[21px] h-[21px] rounded-full border-[3px] border-[#d8d8d8]" />
          <span className="ml-[6px] text-[13px] text-[#9a9a9a]">在这里输入你要搜索的内容</span>
          <svg width="12" height="20" viewBox="0 0 12 20" className="ml-auto mr-[15px]"><rect x="3.500" y="1" width="5" height="11" rx="2.500" fill="none" stroke="#aaa" /><path d="M1 8c0 7 10 7 10 0M6 14v4M3 18.500h6" fill="none" stroke="#aaa" /></svg>
        </div>
        <div className="flex items-center h-full">
          <div className="w-[46px] flex justify-center"><svg width="20" height="16" viewBox="0 0 20 16"><rect x="4" y="1" width="12" height="14" fill="none" stroke="#fff" strokeWidth="1.300" /><path d="M2 4H0.500v8H2M18 4h1.500v8H18" fill="none" stroke="#fff" /></svg></div>
          <div className="w-[52px] flex justify-center ml-[2px]"><svg width="22" height="26" viewBox="0 0 22 26"><path d="M11 13C4 13 1 10 1 6s3-5 6-5 4 4 4 12zM11 13c7 0 10-3 10-7s-3-5-6-5-4 4-4 12zM11 13C4 13 1 16 1 20s3 5 6 5 4-4 4-12zM11 13c7 0 10 3 10 7s-3 5-6 5-4-4-4-12z" fill="#e6e6e6" /></svg></div>
          <div className="w-[50px] flex justify-center"><svg width="20" height="24" viewBox="0 0 20 24"><path d="M17 4C11 0 2 4 2 12s10 11 15 6c3-4 1-9-4-9-4 0-6 5-2 7" fill="none" stroke="#bbb" strokeWidth="1.500" /><path d="M11 1l7 2-4 4" fill="none" stroke="#bbb" /></svg></div>
          <div className="w-[50px] flex justify-center"><Edge /></div>
          <div className="w-[48px] flex justify-center"><Store /></div>
          <div className="w-[48px] flex justify-center"><Explorer /></div>
          <div className="w-[47px] flex justify-center pr-[2px]"><IE /></div>
          <div className="w-[46px] flex justify-center"><GBlue /></div>
          <div className="w-[47px] flex justify-center"><GreenE /></div>
          <div className="w-[46px] h-full bg-[#333a3e] flex justify-center items-center"><GlodonApp /></div>
          <div className="w-[50px] flex justify-center"><Notes /></div>
          <div className="w-[42px] flex justify-center"><Help /></div>
          <div className="w-[88px] flex flex-col items-center text-[12px] leading-[18px] text-[#eee] ml-[6px]">
            <span>21%</span><span>CPU使用</span>
          </div>
          <svg width="12" height="7" viewBox="0 0 12 7"><path d="M1 6.500L6 1l5 5.500" fill="none" stroke="#eee" strokeWidth="1.200" /></svg>
          <svg width="16" height="13" viewBox="0 0 16 13" className="ml-[10px]"><rect x="3" y="4" width="12" height="8" fill="none" stroke="#eee" /><rect x="3" y="6" width="8" height="5" fill="#eee" /><path d="M0 1l3 3M5 0v4" stroke="#eee" /></svg>
          <svg width="14" height="14" viewBox="0 0 14 14" className="ml-[11px]"><path d="M1 13c0-6 5-11 12-11M4 13c0-5 3-8 9-8M7 13c0-3 2-5 6-5M10 13c0-1 1-2 3-2" fill="none" stroke="#ddd" strokeDasharray="1.500 1" /></svg>
          <svg width="14" height="14" viewBox="0 0 14 14" className="ml-[7px]"><path d="M1 5h2l4-3v10L3 9H1zM9 4c1 2 1 4 0 6M11 2c2 3 2 7 0 10" fill="none" stroke="#eee" /></svg>
          <svg width="23" height="16" viewBox="0 0 23 16" className="ml-[10px]"><rect x="0.500" y="0.500" width="22" height="15" fill="none" stroke="#eee" /><path d="M3 4h17M3 7h17M5 11h13" stroke="#eee" strokeDasharray="1.500 1" /></svg>
          <span className="ml-[9px] text-[13px] font-semibold text-white">中</span>
          <div className="ml-[14px] w-[15px] h-[17px] bg-[#e8401a] rounded-[2px] flex items-center justify-center text-[12px] font-bold leading-none -rotate-6 text-white">S</div>
          <div className="w-[84px] flex flex-col items-center text-[12px] leading-[18px] text-[#eee] ml-[11px]">
            <span>14:16</span><span>2017/11/3</span>
          </div>
          <div className="relative w-[16px] h-[16px]">
            <svg width="15" height="14" viewBox="0 0 15 14"><path d="M0 0h15v11H6l-3 3v-3H0z" fill="#fff" /><path d="M2 3h11M2 5.500h11M2 8h11" stroke="#888" /></svg>
            <div className="absolute left-[7px] top-[6px] w-[17px] h-[17px] rounded-full bg-[#3a3a3a] border border-[#888] text-[11px] font-bold leading-[15px] text-center text-white">2</div>
          </div>
        </div>
        <div className="absolute left-[740px] bottom-0 h-[2px] w-[38px] bg-[#76b9ed]" />
        <div className="absolute left-[787px] bottom-0 h-[2px] w-[38px] bg-[#76b9ed]" />
        <div className="absolute left-[830px] bottom-0 h-[2px] w-[46px] bg-[#76b9ed]" />
        <div className="absolute left-[881px] bottom-0 h-[2px] w-[38px] bg-[#76b9ed]" />
        <div className="absolute left-[928px] bottom-0 h-[2px] w-[38px] bg-[#76b9ed]" />
      </div>

      {/* IME bar */}
      <div className="absolute left-[133px] top-[3px] h-[23px] w-[183px] bg-[#f6fafd] border border-[#c4d4e4] flex items-center">
        <div className="absolute -left-[1px] -top-[4px] w-[24px] h-[27px] bg-[#ed4b12] rounded-[3px] -rotate-6 flex items-center justify-center text-white text-[26px] font-bold font-['Liberation_Sans',sans-serif] leading-none">S</div>
        <span className="ml-[31px] text-[15px] font-bold text-[#1670c8]">中</span>
        <svg width="14" height="12" viewBox="0 0 14 12" className="ml-[8px]"><circle cx="3" cy="4" r="2" fill="none" stroke="#1670c8" strokeWidth="1.300" /><path d="M11 5c1 1 0 4-2 5" fill="none" stroke="#1670c8" strokeWidth="2" /></svg>
        <svg width="13" height="16" viewBox="0 0 13 16" className="ml-[8px]"><rect x="4" y="0" width="5" height="10" rx="2.500" fill="#1670c8" /><path d="M1 7c0 6 11 6 11 0M6.500 12v3M3 15.500h7" fill="none" stroke="#1670c8" strokeWidth="1.200" /></svg>
        <svg width="16" height="12" viewBox="0 0 16 12" className="ml-[7px]"><rect width="16" height="12" rx="2" fill="#1670c8" /><path d="M2 3h12M2 6h12" stroke="#fff" strokeDasharray="1.500 1" /><path d="M4 9h8" stroke="#fff" /></svg>
        <svg width="16" height="15" viewBox="0 0 16 15" className="ml-[7px]"><circle cx="6" cy="4" r="3.500" fill="#aab8c4" /><path d="M0 14c0-4 3-6 6-6s6 2 6 6z" fill="#aab8c4" /><rect x="9" y="9" width="7" height="5" fill="#fff" stroke="#aab8c4" /></svg>
        <svg width="14" height="14" viewBox="0 0 14 14" className="ml-[6px]"><path d="M4 0l3 1 3-1 4 3-2 3-1-1v9H3V5L2 6 0 3z" fill="#1670c8" /></svg>
        <svg width="14" height="14" viewBox="0 0 14 14" className="ml-[8px]"><path d="M1 11l6-6c-1-3 2-5 5-4l-2 2 1 2 2 0 1-2c1 3-1 6-4 5l-6 6z" fill="#1670c8" /></svg>
      </div>

      {/* network-speed widget */}
      <div className="absolute left-[1063px] top-[23px] w-[125px] h-[39px] rounded-full bg-gradient-to-b from-[#f2f2f2] to-[#d8d8d8] shadow-[0_1px_3px_rgba(0,0,0,0.45)] flex items-center">
        <div className="w-[48px] h-[48px] -ml-[2px] mt-[1px] shrink-0 rounded-full border-[3px] border-[#e8e8e8] shadow-[0_0_2px_rgba(0,0,0,0.5)] bg-gradient-to-b from-[#1f7a52] from-[25%] via-[#3bbf5e] via-[30%] to-[#49cc63] flex items-center justify-center text-white text-[14px] font-['Liberation_Sans',sans-serif]">70%</div>
        <div className="flex flex-col gap-[6px] ml-[4px]">
          <svg width="7" height="8" viewBox="0 0 7 8"><path d="M3.500 0L7 4H5v4H2V4H0z" fill="#e2604a" /></svg>
          <svg width="7" height="8" viewBox="0 0 7 8"><path d="M3.500 8L7 4H5V0H2v4H0z" fill="#2d9e5a" /></svg>
        </div>
        <div className="flex flex-col items-end ml-[18px] text-[10px] leading-[15px] text-[#222] font-['Liberation_Sans',sans-serif]">
          <span>0K/s</span><span>0K/s</span>
        </div>
        <div className="relative ml-[6px] mt-[4px] w-[17px] h-[17px] rounded-full bg-[#3b82d8] flex items-center justify-center text-white text-[15px] leading-none font-bold">
          +
          <div className="absolute -right-[3px] -top-[3px] w-[8px] h-[8px] rounded-full bg-[#d0262a]" />
        </div>
      </div>

      {/* dialog */}
      <div className="absolute left-[462px] top-[95px] w-[749px] h-[569px] border border-[#2c2c2c] bg-[#b9d1ea] flex flex-col">
        <div className="h-[29px] shrink-0 bg-gradient-to-b from-[#97b0cf] to-[#bad2ea] flex items-center pl-[7px] pt-[6px] text-[12px] text-[#111]">截面编辑</div>
        <div className="flex-1 min-h-0 mx-[7px] mb-[5px] bg-[#f0f0f0] flex flex-col">
          <div className="h-[21px] shrink-0 flex items-end border-b border-[#d8d8d8]">
            <div className="ml-[1px] w-[42px] h-[19px] pl-[5px] bg-[#f0f0f0] border border-b-0 border-[#d0d0d0] flex items-center text-[12px] text-[#111]">截面</div>
            <div className="w-[44px] h-[21px] pl-[6px] pb-[2px] bg-[#f8f8f8] border border-b-0 border-[#d0d0d0] flex items-center text-[12px] text-[#111]">配筋</div>
          </div>
          <div className="flex-1 min-h-0 flex flex-col pl-[5px] pr-[5px] pt-[4px]">
            {/* toolbar 1 */}
            <div className="h-[26px] w-[515px] shrink-0 bg-[#f6f6f6] flex items-center text-[12px] text-[#111] whitespace-nowrap pl-[6px]">
              <span className="w-[32px]">纵筋</span>
              <Sep />
              <div className="ml-[2px] w-[34px] h-[22px] bg-[#dbe9f6] border border-[#0f78c8] flex items-center justify-center">直线</div>
              <Caret cls="ml-[3px] text-[#111]" />
              <div className="ml-[5px] w-[75px] h-[24px] bg-white flex items-center text-[#222] relative">
                C6@200
                <Caret cls="absolute right-[2px] top-[10px] text-[#111]" />
              </div>
              <Sep cls="ml-[5px]" />
              <div className="ml-[1px] w-[51px] h-[22px] bg-[#dbe9f6] border border-[#0f78c8] flex items-center pl-[4px]">
                <svg width="11" height="16" viewBox="0 0 11 16"><path d="M1 1v13l3-3 2 4 2-1-2-4h4z" fill="#eee" stroke="#666" /></svg>
                <span className="ml-[3px]">选择</span>
              </div>
              <span className="ml-[4px] w-[84px]">手动设置参考线</span>
              <Caret cls="ml-[7px] text-[#111]" />
              <Sep cls="ml-[5px]" />
              <S cls="ml-[5px]"><path d="M4 2h11l-3 12H1z" fill="#fff" stroke="#2070c8" strokeWidth="1.200" /><path d="M5 8h6L8 11z" fill="#2070c8" /></S>
              <span className="ml-[4px] w-[48px]">设置标高</span>
              <S cls="ml-[8px]"><rect x="1" y="7" width="13" height="8" fill="#fff" stroke="#24427c" strokeWidth="1.500" /><path d="M5 8v6M9 8v6" stroke="#24427c" /><rect x="2.500" y="11" width="2" height="3" fill="#d04020" /><path d="M3 1h11v6l-4 1H3z" fill="#d0def0" stroke="#99a" strokeWidth="0.700" /></S>
              <span className="ml-[4px] w-[48px]">显示标注</span>
              <span className="ml-[9px] text-[#999]">删除</span>
            </div>
            {/* toolbar 2 */}
            <div className="mt-[3px] h-[25px] w-[162px] shrink-0 bg-[#f6f6f6] flex items-center text-[12px] text-[#111] whitespace-nowrap pl-[6px]">
              <span className="w-[32px]">横筋</span>
              <Sep />
              <span className="ml-[2px] w-[52px]">钢筋类型:</span>
              <div className="w-[34px] h-[22px] bg-[#dbe9f6] border border-[#0f78c8] flex items-center justify-center">水平</div>
              <span className="ml-[5px]">垂直</span>
            </div>
            {/* canvas */}
            <div className="mt-[2px] w-[723px] h-[395px] shrink-0 border-2 border-[#ff0000]">
              <Drawing />
            </div>
            {/* bottom toolbar */}
            <div className="mt-[2px] h-[25px] w-[232px] shrink-0 bg-[#f6f6f6] flex items-center text-[12px] text-[#111] whitespace-nowrap pl-[3px]">
              <S w={18} h={18}><path d="M0 2h14v3H6v12H3V5H0z" fill="#d8a0a0" /><path d="M8 9l6 4-3 1-1 3z" fill="#bbb" stroke="#777" strokeWidth="0.600" /></S>
              <span className="ml-[3px] w-[28px]">正交</span>
              <div className="w-[75px] h-[23px] bg-[#dbe9f6] border border-[#0f78c8] flex items-center pl-[2px]">
                <S w={17} h={17}><path d="M0.500 1.500h16M0.500 4.500h16" stroke="#c07070" /><rect x="2.500" y="8.500" width="12" height="8" fill="#fff" stroke="#444" /><text x="8.500" y="15.500" fontSize="7" textAnchor="middle" fontFamily="'Liberation Mono',monospace" fill="#111">12</text></S>
                <span className="ml-[3px]">动态输入</span>
              </div>
              <S w={18} h={16} cls="ml-[6px]"><path d="M1 12h16" stroke="#3a7bc8" strokeWidth="1.500" /><path d="M12 1v14" stroke="#3a7bc8" strokeWidth="1.500" /><rect x="10" y="10" width="4" height="4" fill="#1d3f8c" /></S>
              <span className="ml-[3px] w-[24px]">垂点</span>
              <S w={18} h={16} cls="ml-[6px]"><path d="M1 8h16" stroke="#8ab8e8" strokeWidth="2" /><rect x="7" y="6" width="4" height="4" fill="#1d3f8c" /></S>
              <span className="ml-[3px]">中点</span>
            </div>
          </div>
          {/* dialog status */}
          <div className="h-[27px] shrink-0 flex items-end pb-[2px] gap-[2px] text-[12px] text-[#222] whitespace-nowrap">
            <div className="w-[97px] h-[23px] bg-[#f4f4f4] border border-[#d8d8d8] flex items-center pl-[4px] font-['Liberation_Sans',sans-serif] text-[11.500px] text-[#333]">(X: 806 Y: 408)</div>
            <div className="flex-1 h-[23px] bg-[#f4f4f4] border border-[#d8d8d8] flex items-center pl-[1px] relative">
              选择钢筋进行编辑，选择标注进行修改或移动;
              <svg width="11" height="11" viewBox="0 0 11 11" className="absolute right-[3px] bottom-[1px]"><path d="M8 1h2v2H8zM4 5h2v2H4zM8 5h2v2H8zM0 9h2v2H0zM4 9h2v2H4zM8 9h2v2H8z" fill="#b8b8b8" /></svg>
            </div>
          </div>
        </div>
      </div>
    </div>
  );
}

export default App;
